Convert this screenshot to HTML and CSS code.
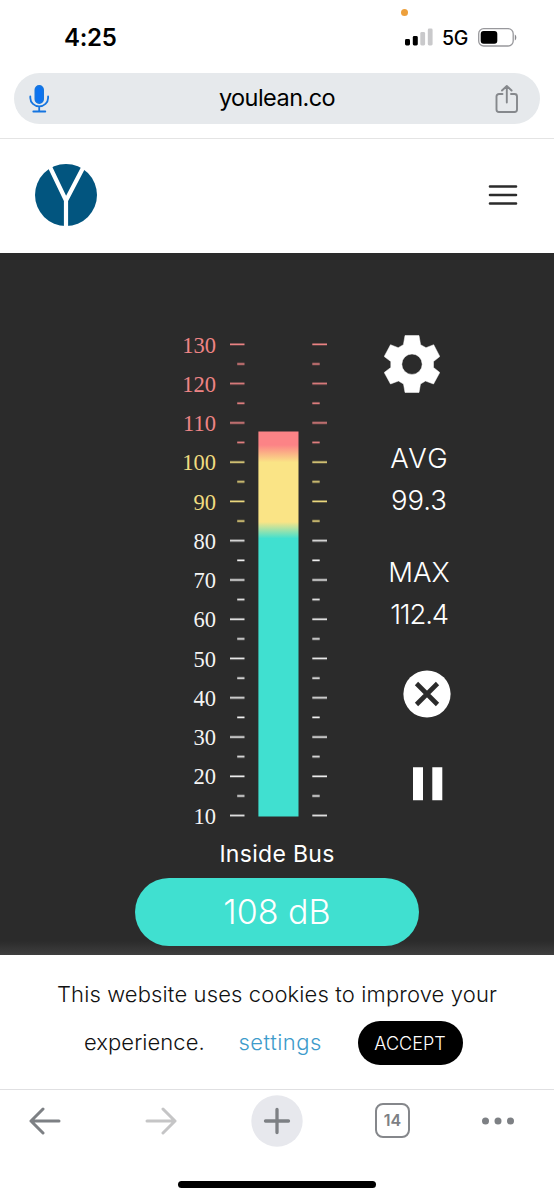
FILE: index.html
```html
<!DOCTYPE html>
<html lang="en">
<head>
<meta charset="utf-8">
<meta name="viewport" content="width=device-width, initial-scale=1">
<title>youlean.co</title>
<link rel="stylesheet" href="styles.css">
</head>
<body>
<div class="status">
  <span class="time">4:25</span>
  <span class="mic-dot"></span>
  <svg class="signal" width="28" height="18" viewBox="0 0 28 18"><rect x="0" y="11" width="5" height="6.5" rx="1.4"/><rect x="7.8" y="8" width="5" height="9.500" rx="1.4"/><g fill="#c9c9cb"><rect x="15.300" y="4" width="4.800" height="13.500" rx="1.4"/><rect x="22.800" y="0.500" width="4.800" height="17" rx="1.4"/></g></svg>
  <span class="network">5G</span>
  <svg class="battery" width="39" height="19" viewBox="0 0 39 19"><rect x=".7" y=".7" width="34.500" height="17.300" rx="5" fill="none" stroke="#98989c" stroke-width="1.300"/><rect x="2.700" y="3" width="16.600" height="12.800" rx="3"/><path d="M36.800 6.500c2 .8 2 5.200 0 6z" fill="#88888c"/></svg>
</div>
<div class="urlbar">
  <svg width="22" height="30" viewBox="0 0 22 30" fill="none" stroke="#1575e0" stroke-width="1.800" stroke-linecap="round"><rect x="7.400" y="2" width="7.700" height="17" rx="3.800" fill="#0b73f2"/><path d="M2.300 12.500v1.500a8.900 8.300 0 0 0 17.800 0v-1.500M11.200 22.500v5M5.300 27.500h12"/></svg>
  <span class="host">youlean.co</span>
  <svg width="24" height="30" viewBox="0 0 24 30" fill="none" stroke="#85888c" stroke-width="1.900" stroke-linecap="round" stroke-linejoin="round"><path d="M7.500 10H4a2.500 2.500 0 0 0-2.500 2.500v13A2.500 2.500 0 0 0 4 28h15.500a2.500 2.500 0 0 0 2.500-2.500v-13a2.500 2.500 0 0 0-2.500-2.500H16M11.800 18.500V2.500M7 6.500l4.800-4.500 4.800 4.500"/></svg>
</div>
<header class="site-header">
  <svg width="62" height="62" viewBox="0 0 62 62"><circle cx="31" cy="31" r="31" fill="#02557f"/><path d="M14.500 2L31 36.500 49 2M31 35v28" fill="none" stroke="#fff" stroke-width="4.200"/></svg>
  <svg width="30" height="22" viewBox="0 0 30 22" stroke="#2b2b2b" stroke-width="2.600" stroke-linecap="round"><path d="M2 2.500h26M2 11h26M2 19.500h26"/></svg>
</header>
<main class="meter-page">
  <div class="meter-row">
    <ol class="labels">
      <li class="red">130</li><li class="red">120</li><li class="red">110</li><li class="yellow">100</li><li class="yellow">90</li><li>80</li><li>70</li><li>60</li><li>50</li><li>40</li><li>30</li><li>20</li><li>10</li>
    </ol>
    <svg class="gauge" width="98" height="474" viewBox="0 0 98 474">
      <defs>
        <linearGradient id="level" x1="0" y1="88.500" x2="0" y2="473.500" gradientUnits="userSpaceOnUse">
          <stop offset="0" stop-color="#fc8386"/><stop offset=".035" stop-color="#fc8386"/><stop offset=".08" stop-color="#fae486"/><stop offset=".235" stop-color="#fae486"/><stop offset=".278" stop-color="#40e0d0"/><stop offset="1" stop-color="#40e0d0"/>
        </linearGradient>
        <pattern id="ticks" width="98" height="39.270" patternUnits="userSpaceOnUse"><path d="M0 1.250h14.500M82.300 1.250H97M7.200 20.900h7.300M82.300 20.900h7.400" stroke="#fff" stroke-width="1.700"/></pattern>
        <mask id="tickmask"><rect width="98" height="474" fill="url(#ticks)"/></mask>
      </defs>
      <g mask="url(#tickmask)"><rect width="98" height="112" fill="#ee8485"/><rect y="112" width="98" height="78" fill="#f0dc80"/><rect y="190" width="98" height="284" fill="#f4f4f4"/></g>
      <rect x="28.400" y="88.500" width="40.100" height="385" fill="url(#level)"/>
    </svg>
    <aside class="readout">
      <svg class="gear" width="56" height="58" viewBox="0 0 56 58" fill="#fff"><path fill-rule="evenodd" d="M21 .5h14l1.600 9.200 5.400 3 7.700-3L55.800 21.500 49.500 26.500v6L55.800 37.500 49.500 49l-8-3-5 3-1.500 8.500H21L19.500 49l-5-3-8 3L.2 37.500 6.800 32.500v-6L.2 21.500 6.500 9.700l7.700 3 5.200-3zM28 19a10.200 10.200 0 1 0 0 20.400A10.200 10.200 0 0 0 28 19z" stroke="#fff" stroke-width=".5" stroke-linejoin="round"/></svg>
      <div class="stat avg"><span class="name wide">AVG</span><span class="value">99.3</span></div>
      <div class="stat max"><span class="name">MAX</span><span class="value last">112.4</span></div>
      <svg class="reset" width="48" height="48" viewBox="0 0 48 48"><circle cx="24" cy="24" r="23.600" fill="#fff"/><path d="M13.500 13.500l21 21M34.500 13.500l-21 21" stroke="#2b2b2b" stroke-width="4.600"/></svg>
      <svg class="pause" width="30" height="34" viewBox="0 0 30 34" fill="#fff"><path d="M0 .3h10v33H0zM19.300 .3h10v33h-10z"/></svg>
    </aside>
  </div>
  <div class="place">Inside Bus</div>
  <div class="level"><span>108 dB</span></div>
</main>
<section class="cookies">
  <p class="notice">This website uses cookies to improve your</p>
  <div class="choices"><span class="experience">experience.</span><a class="settings">settings</a><button class="accept">ACCEPT</button></div>
</section>
<nav class="toolbar">
  <svg width="34" height="28" viewBox="0 0 34 28" fill="none" stroke="#7d8084" stroke-width="3" stroke-linecap="round" stroke-linejoin="round"><path d="M31 14H3M15 2L3 14l12 12"/></svg>
  <svg class="forward" width="34" height="28" viewBox="0 0 34 28" fill="none" stroke="#c5c5c6" stroke-width="3" stroke-linecap="round" stroke-linejoin="round"><path d="M3 14h28M19 2l12 12-12 12"/></svg>
  <svg class="new-tab" width="52" height="52" viewBox="0 0 52 52"><circle cx="26" cy="26" r="25.700" fill="#e7e8ed"/><path d="M26 14.500v23M14.500 26h23" stroke="#7d8084" stroke-width="3.300" stroke-linecap="round"/></svg>
  <span class="tabs">14</span>
  <svg class="more" width="34" height="8" viewBox="0 0 34 8" fill="#7d8084"><circle cx="4.500" cy="4" r="3.500"/><circle cx="17" cy="4" r="3.500"/><circle cx="29.500" cy="4" r="3.500"/></svg>
</nav>
<div class="home"><span></span></div>
</body>
</html>
```
FILE: styles.css
```css
* { box-sizing: border-box; }
body { margin: 0; width: 554px; height: 1200px; overflow: hidden; background: #fff; font-family: Inter, "Liberation Sans", sans-serif; color: #000; }
svg { display: block; flex: none; }
.status { position: relative; height: 73px; padding: 0 37px 0 64px; display: flex; align-items: flex-start; }
.time { font-size: 24px; line-height: 30px; margin-top: 23px; font-weight: 600; letter-spacing: -.3px; }
.mic-dot { position: absolute; left: 401px; top: 9px; width: 7px; height: 7px; border-radius: 50%; background: #eda03c; }
.signal { margin: 28px 0 0 auto; }
.network { width: 45px; margin-top: 24px; padding-left: 9px; font-size: 19.500px; line-height: 28px; font-weight: 500; letter-spacing: -.3px; white-space: nowrap; }
.battery { margin-top: 27.500px; }
.urlbar { height: 51px; margin: 0 14px; padding: 0 21px 0 14px; border-radius: 26px; background: #e6e9ec; display: flex; align-items: center; }
.host { flex: 1; padding-left: 9px; text-align: center; font-size: 23.500px; line-height: 30px; letter-spacing: -.55px; margin-top: -2px; }
.site-header { height: 115px; margin-top: 14px; padding: 0 36px 2px 35px; border-top: 1px solid #e4e4e4; display: flex; align-items: center; justify-content: space-between; }
.meter-page { height: 702px; background: linear-gradient(#2b2b2b 0, #2b2b2b 688px, #3e3e3e 702px); color: #fff; padding-top: 72px; display: flex; flex-direction: column; align-items: center; }
.meter-row { width: 554px; height: 511px; display: flex; }
.labels { list-style: none; width: 216px; margin: 0; padding: .6px 0 0; font: 22.500px/39.250px "Liberation Serif", serif; text-align: right; color: #f4f4f4; }
.labels li { height: 39.250px; }
.labels .red { color: #ee8485; }
.labels .yellow { color: #f0dc80; }
.gauge { margin: 18px 57px 0 14px; }
.readout { width: 80px; }
.gear { margin: 10px 0 0 -1px; }
.stat { width: 68px; display: flex; flex-direction: column; align-items: center; font-size: 27.500px; line-height: 42px; font-weight: 300; }
.avg { margin-top: 44px; }
.max { margin-top: 30px; }
.wide { letter-spacing: 1.300px; margin-right: -1.300px; }
.last { letter-spacing: -1.200px; }
.reset { margin: 35px 0 0 18px; }
.pause { margin: 49px 0 0 28px; }
.place { font-size: 23px; line-height: 34px; margin-top: 1px; font-weight: 400; letter-spacing: .3px; }
.level { width: 284px; height: 68px; margin-top: 7px; padding-bottom: 2px; border-radius: 34px; background: #40e0d0; display: flex; align-items: center; justify-content: center; font-size: 34px; font-weight: 300; }
.cookies { height: 134px; font-weight: 300; font-size: 22px; color: #111; }
.notice { margin: 0; padding-top: 23px; line-height: 32px; text-align: center; white-space: nowrap; letter-spacing: .13px; }
.choices { display: flex; align-items: center; height: 44px; margin-top: 11px; padding-left: 84px; }
.experience { width: 154.500px; margin-top: -2px; letter-spacing: .05px; }
.settings { width: 119px; margin-top: -2px; color: #3d9bcb; letter-spacing: .5px; }
.accept { width: 105px; height: 44px; border: 0; border-radius: 22px; padding: 0; background: #000; color: #fff; font: 300 18px Inter, sans-serif; }
.toolbar { height: 79px; border-top: 1px solid #e0e0e2; padding: 0 0 17px 28px; display: flex; align-items: center; }
.forward { margin-left: 82px; }
.new-tab { margin-left: 73px; }
.tabs { width: 35px; height: 35px; margin-left: 72px; border: 2.500px solid #85878b; border-radius: 8px; font-size: 16px; line-height: 31px; text-align: center; font-weight: 600; color: #7d8084; }
.more { margin-left: 71px; }
.home { display: flex; justify-content: center; padding-top: 13px; }
.home span { width: 198px; height: 7px; border-radius: 4px; background: #000; }
```
